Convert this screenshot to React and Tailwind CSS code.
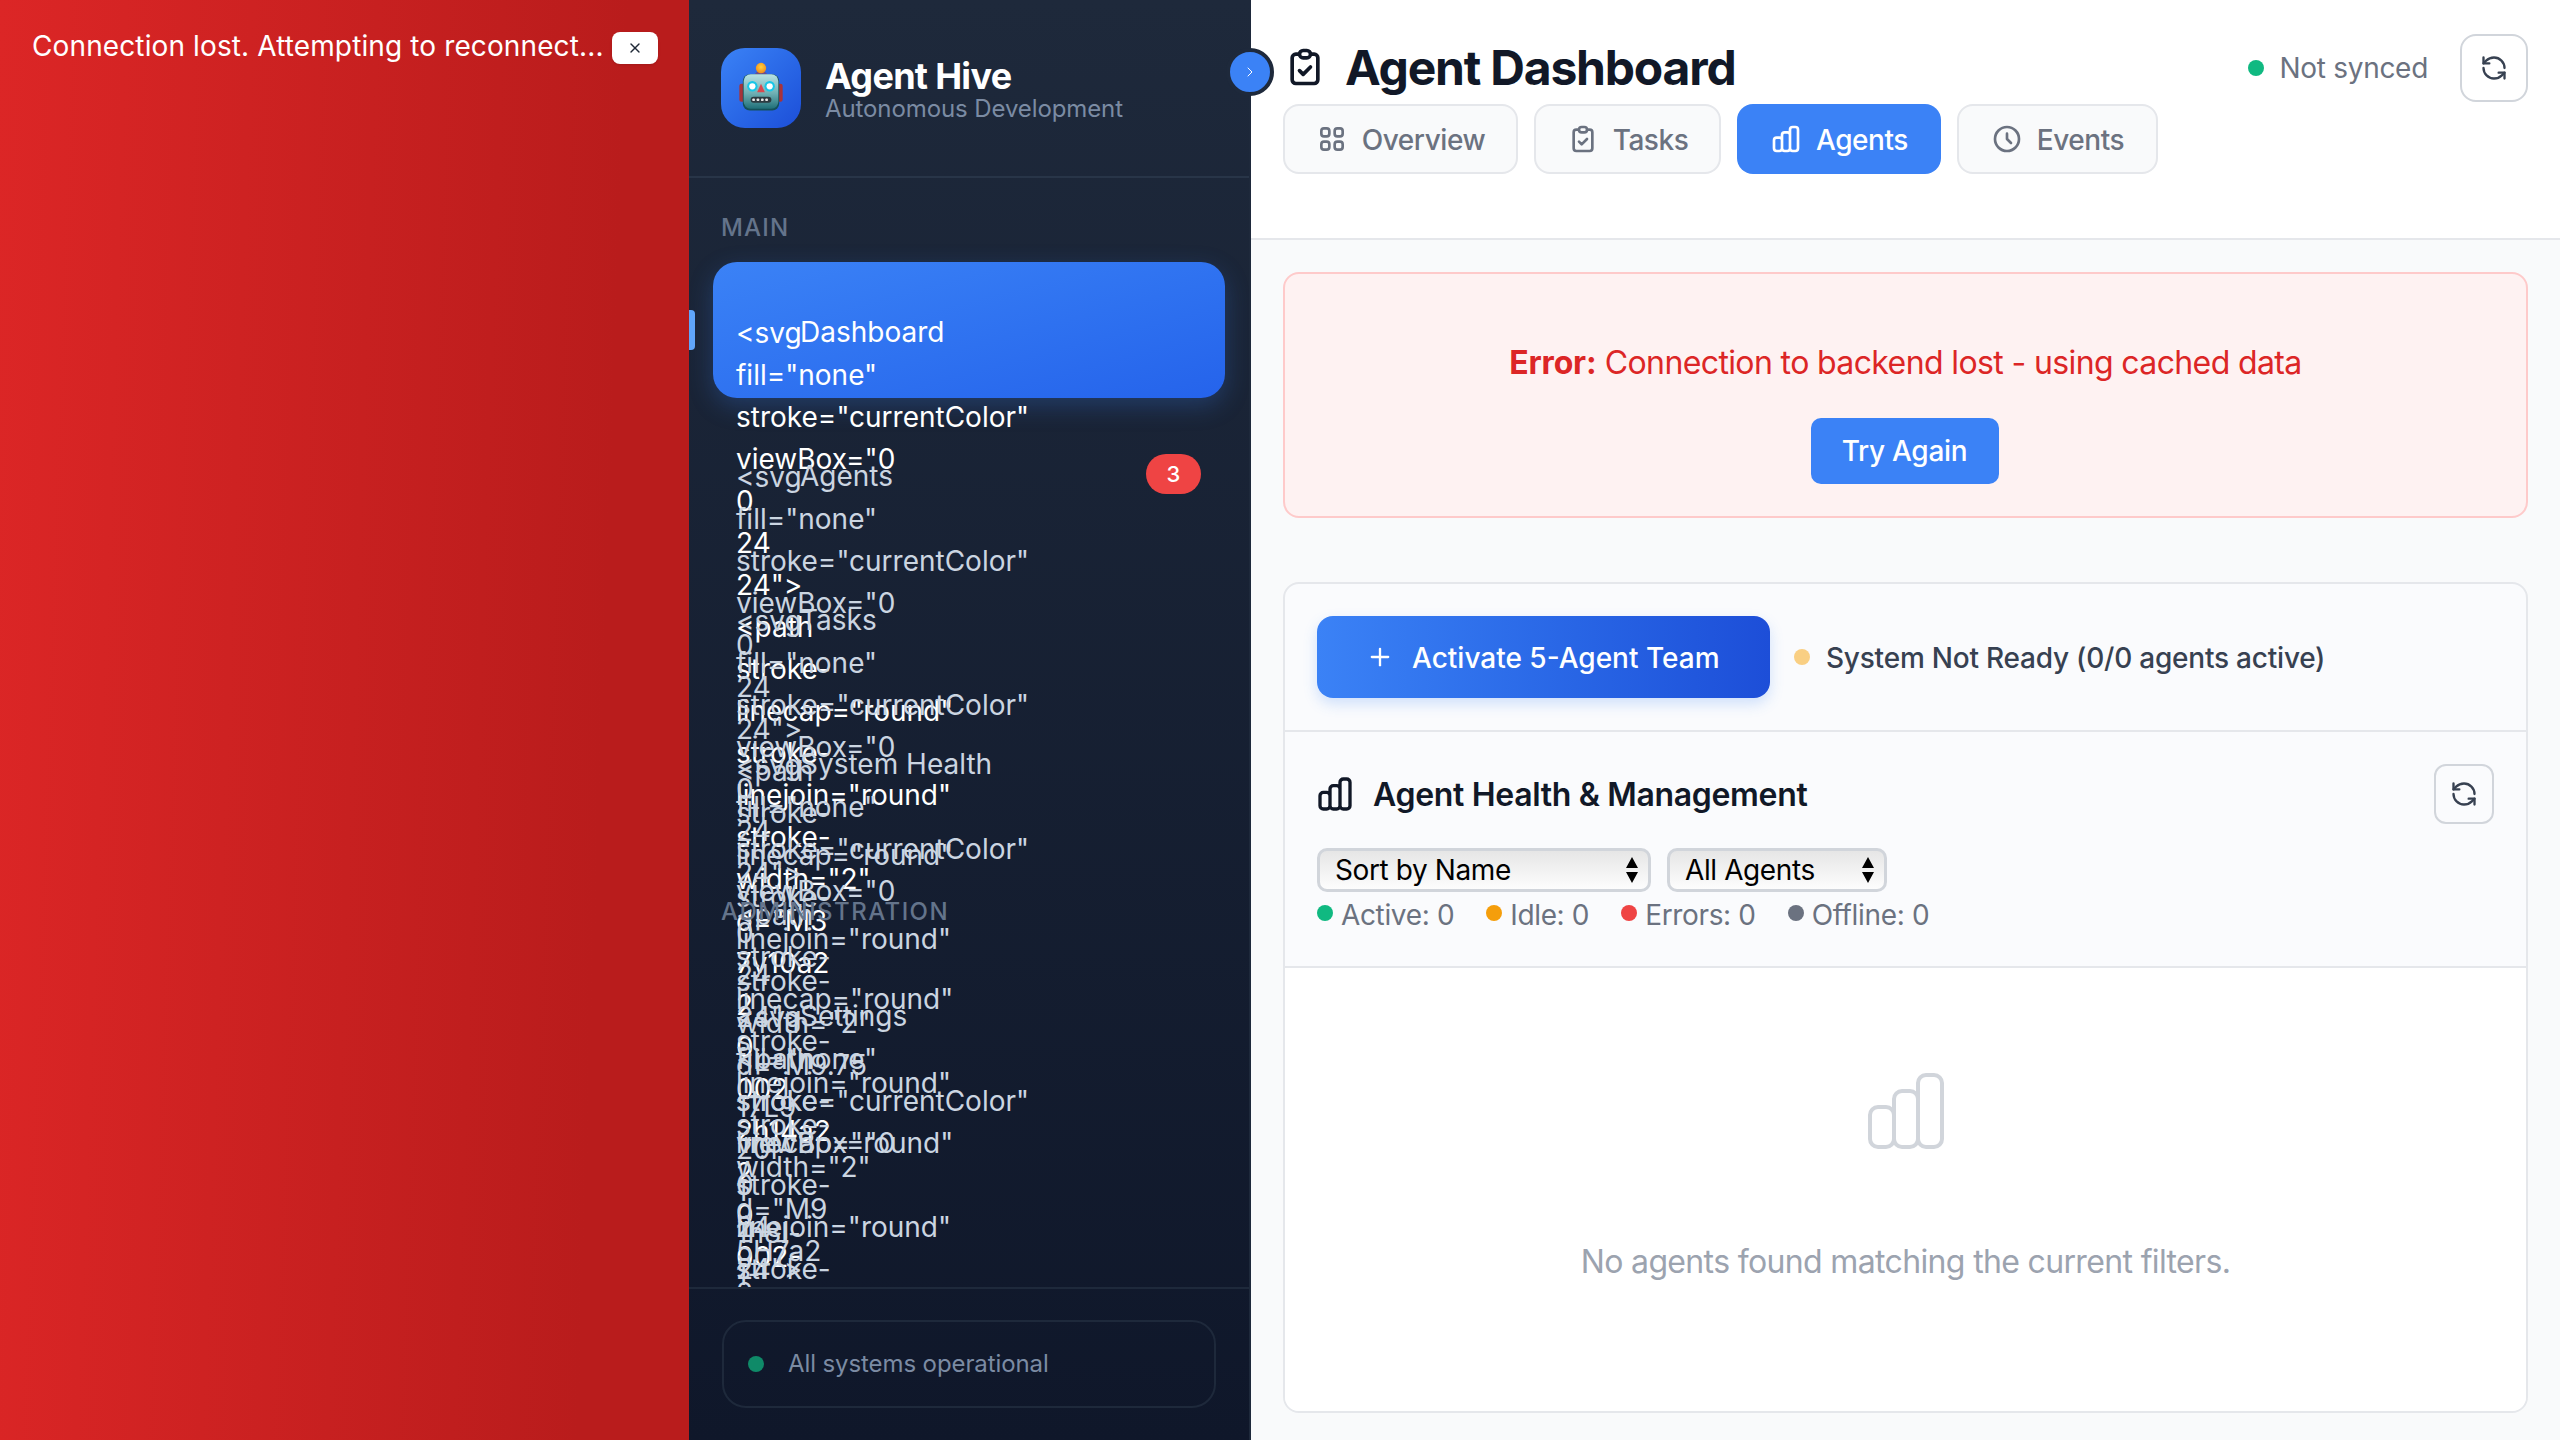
import React from "react";
import { RefreshCcw, ChevronRight, Plus, X } from "lucide-react";

const head = 'fill="none" stroke="currentColor" viewBox="0 0 24 24"><path stroke-linecap="round" stroke-linejoin="round" stroke-width="2" d="';
const tail = '"></path></svg>';
const raw = (d) => "<svg " + head + d + tail;

const CLIP = "M9 5H7a2 2 0 00-2 2v12a2 2 0 002 2h10a2 2 0 002-2V7a2 2 0 00-2-2h-2M9 5a2 2 0 002 2h2a2 2 0 002-2M9 5a2 2 0 012-2h2a2 2 0 012 2m-6 9l2 2 4-4";
const CHART = "M9 19v-6a2 2 0 00-2-2H5a2 2 0 00-2 2v6a2 2 0 002 2h2a2 2 0 002-2zm0 0V9a2 2 0 012-2h2a2 2 0 012 2v10m-6 0a2 2 0 002 2h2a2 2 0 002-2m0 0V5a2 2 0 012-2h2a2 2 0 012 2v14a2 2 0 01-2 2h-2a2 2 0 01-2-2z";
const GRID = "M4 6a2 2 0 012-2h2a2 2 0 012 2v2a2 2 0 01-2 2H6a2 2 0 01-2-2V6zM14 6a2 2 0 012-2h2a2 2 0 012 2v2a2 2 0 01-2 2h-2a2 2 0 01-2-2V6zM4 16a2 2 0 012-2h2a2 2 0 012 2v2a2 2 0 01-2 2H6a2 2 0 01-2-2v-2zM14 16a2 2 0 012-2h2a2 2 0 012 2v2a2 2 0 01-2 2h-2a2 2 0 01-2-2v-2z";
const CLOCK = "M12 8v4l3 3m6-3a9 9 0 11-18 0 9 9 0 0118 0z";

const Hero = ({ d, className, sw = "2" }) => (
  <svg className={className} fill="none" stroke="currentColor" viewBox="0 0 24 24">
    <path strokeLinecap="round" strokeLinejoin="round" strokeWidth={sw} d={d} />
  </svg>
);

const Robot = () => (
  <svg width="52" height="52" viewBox="0 0 60 60">
    <defs>
      <linearGradient id="face" x1="0" y1="0" x2="0" y2="1">
        <stop offset="0" stopColor="#b9e2e4" />
        <stop offset="0.55" stopColor="#6fb0b4" />
        <stop offset="1" stopColor="#1f6f78" />
      </linearGradient>
      <radialGradient id="bulb" cx="0.5" cy="0.4" r="0.6">
        <stop offset="0" stopColor="#ffd23f" />
        <stop offset="1" stopColor="#f08a1c" />
      </radialGradient>
    </defs>
    <rect x="5" y="25" width="6" height="21" rx="2.5" fill="#a8333a" />
    <rect x="49" y="25" width="6" height="21" rx="2.5" fill="#a8333a" />
    <path d="M23 15a7 5 0 0114 0z" fill="#6a4e8f" />
    <circle cx="30" cy="7" r="6" fill="url(#bulb)" />
    <rect x="9" y="14" width="42" height="42" rx="8" fill="#14505a" />
    <rect x="10" y="14" width="40" height="40" rx="8" fill="url(#face)" />
    <circle cx="20" cy="28" r="6" fill="#17c6e8" />
    <circle cx="20" cy="28" r="3.6" fill="#ffffff" />
    <circle cx="40" cy="28" r="6" fill="#17c6e8" />
    <circle cx="40" cy="28" r="3.6" fill="#ffffff" />
    <path d="M30 25l4.5 10h-9z" fill="#d9484f" />
    <rect x="18" y="40" width="24" height="7" rx="3.5" fill="#2c3a40" />
    <g fill="#e6e6e6">
      <rect x="20" y="42" width="3" height="3" rx="1" />
      <rect x="25" y="42" width="3" height="3" rx="1" />
      <rect x="30" y="42" width="3" height="3" rx="1" />
      <rect x="35" y="42" width="3" height="3" rx="1" />
    </g>
  </svg>
);

const NavItem = ({ label, icon, active, badge }) => (
  <div
    className={
      "flex items-center gap-[24px] h-[136px] mb-[8px] pl-[23px] pr-[24px] rounded-[24px] text-[28px] leading-[42px] " +
      (active
        ? "bg-gradient-to-br from-[#3b82f6] to-[#2563eb] text-white shadow-[0_8px_24px_rgba(59,130,246,0.25)]"
        : "text-[#cbd5e1]")
    }
  >
    <span className="w-[40px] h-[40px] mt-[3px] shrink-0">{icon}</span>
    <span className="flex-1 mt-[3px]">{label}</span>
    {badge ? (
      <span className="w-[55px] h-[40px] rounded-full bg-[#ef4444] text-white text-[22px] font-medium flex items-center justify-center">
        {badge}
      </span>
    ) : null}
  </div>
);

const Tab = ({ label, d, active, w }) => (
  <div
    className={
      "h-[70px] rounded-[16px] flex items-center justify-center gap-[14px] text-[28px] font-medium tracking-[-0.45px] " +
      w +
      " " +
      (active ? "bg-[#3b82f6] text-white" : "bg-[#f9fafb] border-2 border-[#e5e7eb] text-[#6b7280]")
    }
  >
    <Hero d={d} className="w-[32px] h-[32px]" />
    <span className="pt-[2px]">{label}</span>
  </div>
);

const Stat = ({ color, label }) => (
  <div className="flex items-center gap-[8px]">
    <span className={"w-[16px] h-[16px] rounded-full -mt-[4px] " + color} />
    <span>{label}</span>
  </div>
);

const Sel = ({ w, label }) => (
  <div className={"relative h-[44px] " + w}>
    <select className="appearance-none w-full h-full pl-[15px] rounded-[10px] border-[3px] border-[#d1d5db] bg-gradient-to-b from-[#e6e6e6] to-[#fdfdfd] text-[28px] leading-[38px] tracking-[-0.4px] text-black">
      <option>{label}</option>
    </select>
    <svg className="absolute right-[12px] top-[9px] w-[14px] h-[26px]" viewBox="0 0 14 26" fill="#000000">
      <path d="M7 0l6 11H1zM7 26L1 15h12z" />
    </svg>
  </div>
);

export default function App() {
  return (
    <div className="flex w-full h-[1440px] overflow-hidden font-['Inter',sans-serif] bg-[#f9fafb]">
      {/* Banner */}
      <div className="w-[689px] shrink-0 h-full bg-[linear-gradient(92deg,#dc2626_0%,#b91c1c_85%)] flex items-start gap-[8px] pl-[32px] pt-[32px] text-white text-[28px] leading-[28px]">
        <span className="whitespace-nowrap tracking-[0.12px]">Connection lost. Attempting to reconnect...</span>
        <span className="w-[46px] h-[32px] shrink-0 rounded-[8px] bg-white text-[#1f2937] flex items-center justify-center shadow-sm">
          <X size={16} strokeWidth={2} />
        </span>
      </div>

      {/* Sidebar */}
      <aside className="relative w-[562px] shrink-0 h-full flex flex-col bg-gradient-to-b from-[#1e293b] to-[#0f172a] border-r-2 border-[#1e293b]">
        <div className="h-[178px] shrink-0 border-b-2 border-[#283548] pl-[32px] pt-[48px] flex items-start gap-[24px]">
          <div className="w-[80px] h-[80px] rounded-[24px] bg-gradient-to-br from-[#3b82f6] to-[#1d4ed8] flex items-center justify-center">
            <Robot />
          </div>
          <div className="flex flex-col">
            <span className="text-[36px] leading-[44px] mt-[6px] font-bold tracking-[-0.7px] text-white">Agent Hive</span>
            <span className="text-[24px] leading-[28px] text-[#7b8ba3] -mt-[3px] tracking-[-0.1px]">Autonomous Development</span>
          </div>
        </div>

        <div className="absolute left-[537px] top-[48px] w-[48px] h-[48px] rounded-full bg-[#3b82f6] border-[4px] border-[#1e293b] text-white flex items-center justify-center z-10">
          <ChevronRight size={16} strokeWidth={1.5} />
        </div>

        <span className="absolute left-0 top-[310px] w-[6px] h-[40px] rounded-r-[4px] bg-[#60a5fa]" />

        <nav className="flex-1 min-h-0 overflow-hidden pt-[32px] pl-[24px] pr-[24px]">
          <div className="pl-[8px] text-[24px] leading-[36px] mb-[16px] font-medium tracking-[0.05em] text-[#64748b]">MAIN</div>
          <NavItem active label="Dashboard" icon={raw("M3 7v10a2 2 0 002 2h14a2 2 0 002-2V9a2 2 0 00-2-2H5a2 2 0 00-2-2z")} />
          <NavItem label="Agents" badge="3" icon={raw("M9.75 17L9 20l-1 1h8l-1-1-.75-3M3 13h18M5 17h14a2 2 0 002-2V5a2 2 0 00-2-2H5a2 2 0 00-2 2v10a2 2 0 002 2z")} />
          <NavItem label="Tasks" icon={raw(CLIP)} />
          <NavItem label="System Health" icon={raw("M9 12l2 2 4-4m5.618-4.016A11.955 11.955 0 0112 2.944")} />
          <div className="pl-[8px] mt-[64px] text-[24px] leading-[36px] mb-[16px] font-medium tracking-[0.06em] text-[#64748b]">ADMINISTRATION</div>
          <NavItem label="Settings" icon={raw("M10.325 4.317c.426-1.756 2.924-1.756 3.35 0")} />
        </nav>

        <div className="h-[153px] shrink-0 border-t-2 border-[#1e293b] pl-[33px] pr-[33px] pt-[31px]">
          <div className="h-[88px] rounded-[24px] border-2 border-[#1e293b] flex items-center gap-[24px] pl-[24px] text-[24px] tracking-[-0.1px] text-[#7b8ba3]">
            <span className="w-[16px] h-[16px] rounded-full bg-[#0f8a68]" />
            All systems operational
          </div>
        </div>
      </aside>

      {/* Main */}
      <main className="flex-1 min-w-0 h-full flex flex-col">
        <header className="h-[240px] shrink-0 bg-white border-b-2 border-[#e5e7eb] pl-[32px] pr-[32px] pt-[34px]">
          <div className="flex items-center h-[68px] mb-[2px] gap-[18px]">
            <Hero d={CLIP} className="w-[44px] h-[44px] -mt-[3px] text-[#111827]" />
            <h1 className="text-[48px] leading-[56px] font-bold tracking-[-1.2px] text-[#111827]">Agent Dashboard</h1>
            <div className="ml-auto flex items-center gap-[16px] text-[28px] tracking-[-0.3px] text-[#6b7280]">
              <span className="w-[16px] h-[16px] rounded-full bg-[#10b981]" />
              <span>Not synced</span>
              <button className="ml-[16px] w-[68px] h-[68px] rounded-[16px] border-2 border-[#d1d5db] bg-white text-[#374151] flex items-center justify-center">
                <RefreshCcw size={28} strokeWidth={2} />
              </button>
            </div>
          </div>
          <div className="flex gap-[16px]">
            <Tab label="Overview" d={GRID} w="w-[235px]" />
            <Tab label="Tasks" d={CLIP} w="w-[187px]" />
            <Tab label="Agents" d={CHART} active w="w-[204px]" />
            <Tab label="Events" d={CLOCK} w="w-[201px]" />
          </div>
        </header>

        <div className="flex-1 min-h-0 px-[32px] pt-[32px] flex flex-col">
          <section className="h-[246px] shrink-0 rounded-[16px] border-2 border-[#fecaca] bg-[#fef2f2] flex flex-col items-center pt-[68px]">
            <p className="text-[32px] leading-[42px] text-[#dc2626] tracking-[-0.62px]">
              <span className="font-bold tracking-[-0.2px]">Error:</span> Connection to backend lost - using cached data
            </p>
            <button className="mt-[34px] mr-[2px] w-[188px] h-[66px] rounded-[10px] bg-[#3b82f6] text-white text-[28px] font-medium tracking-[-0.3px]">Try Again</button>
          </section>

          <section className="mt-[64px] h-[831px] shrink-0 rounded-[16px] border-2 border-[#e5e7eb] bg-[#fafbfd] flex flex-col overflow-hidden">
            <div className="h-[148px] shrink-0 border-b-2 border-[#e5e7eb] flex items-center pl-[32px] gap-[24px]">
              <button className="w-[453px] h-[82px] pt-[2px] rounded-[16px] bg-gradient-to-r from-[#3b82f6] to-[#1d4ed8] text-white text-[28px] font-medium flex items-center gap-[18px] pl-[49px] shadow-[0_6px_14px_rgba(59,130,246,0.22)]">
                <Plus size={28} strokeWidth={2} className="-mt-[2px]" />
                Activate 5-Agent Team
              </button>
              <div className="flex items-center gap-[16px] text-[28px] font-medium tracking-[-0.22px] text-[#374151] pt-[2px]">
                <span className="w-[16px] h-[16px] rounded-full bg-[#f9cf83] -mt-[2px]" />
                System Not Ready (0/0 agents active)
              </div>
            </div>

            <div className="h-[236px] shrink-0 border-b-2 border-[#e5e7eb] pl-[32px] pr-[32px] pt-[32px]">
              <div className="flex items-center h-[60px] gap-[18px]">
                <Hero d={CHART} className="w-[40px] h-[40px] text-[#111827] -ml-[2px]" />
                <h2 className="text-[32px] font-semibold tracking-[-0.33px] text-[#111827] pt-[2px]">Agent Health &amp; Management</h2>
                <button className="ml-auto w-[60px] h-[60px] rounded-[12px] border-2 border-[#d1d5db] bg-transparent text-[#374151] flex items-center justify-center">
                  <RefreshCcw size={28} strokeWidth={2} />
                </button>
              </div>
              <div className="flex gap-[16px] mt-[24px]">
                <Sel w="w-[334px]" label="Sort by Name" />
                <Sel w="w-[220px]" label="All Agents" />
              </div>
              <div className="flex gap-[32px] mt-[5px] text-[28px] leading-[36px] tracking-[-0.35px] text-[#6b7280]">
                <Stat color="bg-[#10b981]" label="Active: 0" />
                <Stat color="bg-[#f59e0b]" label="Idle: 0" />
                <Stat color="bg-[#ef4444]" label="Errors: 0" />
                <Stat color="bg-[#6b7280]" label="Offline: 0" />
              </div>
            </div>

            <div className="flex-1 bg-white flex flex-col items-center pt-[95px]">
              <Hero d={CHART} sw="1" className="w-[96px] h-[96px] text-[#d1d5db]" />
              <p className="mt-[79px] text-[32px] leading-[48px] tracking-[-0.65px] text-[#9ca3af]">No agents found matching the current filters.</p>
            </div>
          </section>
        </div>
      </main>
    </div>
  );
}
